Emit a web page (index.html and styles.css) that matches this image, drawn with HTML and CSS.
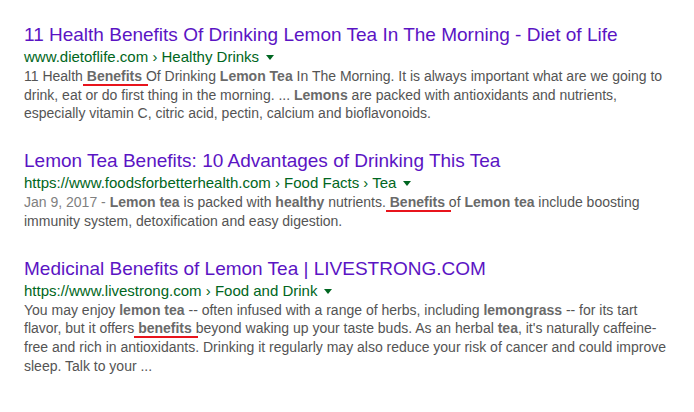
FILE: index.html
```html
<!DOCTYPE html>
<html lang="en">
<head>
    <meta charset="UTF-8">
    <title>lemon tea benefits - Search</title>
    <link rel="stylesheet" href="styles.css">
</head>
<body>
    <div class="results">
        <div class="result">
            <a class="title" href="#">11 Health Benefits Of Drinking Lemon Tea In The Morning - Diet of Life</a>
            <div class="url">www.dietoflife.com › Healthy Drinks<span class="arrow"></span></div>
            <p class="snippet">11 Health <b class="mark">Benefits</b> Of Drinking <b>Lemon Tea</b> In The Morning. It is always important what are we going to drink, eat or do first thing in the morning. ... <b>Lemons</b> are packed with antioxidants and nutrients, especially vitamin C, citric acid, pectin, calcium and bioflavonoids.</p>
        </div>

        <div class="result">
            <a class="title" href="#">Lemon Tea Benefits: 10 Advantages of Drinking This Tea</a>
            <div class="url">https://www.foodsforbetterhealth.com › Food Facts › Tea<span class="arrow"></span></div>
            <p class="snippet"><span class="date">Jan 9, 2017 - </span><b>Lemon tea</b> is packed with <b>healthy</b> nutrients. <b class="mark">Benefits</b> of <b>Lemon tea</b> include boosting immunity system, detoxification and easy digestion.</p>
        </div>

        <div class="result">
            <a class="title" href="#">Medicinal Benefits of Lemon Tea | LIVESTRONG.COM</a>
            <div class="url">https://www.livestrong.com › Food and Drink<span class="arrow"></span></div>
            <p class="snippet">You may enjoy <b>lemon tea</b> -- often infused with a range of herbs, including <b>lemongrass</b> -- for its tart flavor, but it offers <b class="mark">benefits</b> beyond waking up your taste buds. As an herbal <b>tea</b>, it's naturally caffeine-free and rich in antioxidants. Drinking it regularly may also reduce your risk of cancer and could improve sleep. Talk to your ...</p>
        </div>
    </div>
</body>
</html>
```

FILE: styles.css
```css
* {
    margin: 0;
    padding: 0;
    box-sizing: border-box;
}

body {
    font-family: 'Liberation Sans', Arial, sans-serif;
    background: #fff;
    padding: 24px 0 0 24px;
}

.results {
    max-width: 650px;
}

.result {
    margin-bottom: 27px;
}

.title {
    display: block;
    font-size: 19px;
    line-height: 22px;
    color: #5b14c4;
    text-decoration: none;
}

.url {
    font-size: 15px;
    line-height: 20px;
    margin-top: 1px;
    color: #006621;
    display: flex;
    align-items: center;
}

.arrow {
    margin-left: 7px;
    margin-top: 1px;
    border-top: 5px solid #006621;
    border-left: 4px solid transparent;
    border-right: 4px solid transparent;
}

.snippet {
    font-size: 14px;
    line-height: 18.7px;
    color: #545454;
}

.snippet b {
    color: #6a6a6a;
}

.date {
    color: #808080;
}

/* hand-drawn red marker under the keyword */
.mark {
    position: relative;
}

.mark::after {
    content: '';
    position: absolute;
    left: -4px;
    right: -6px;
    bottom: -2px;
    height: 2px;
    background: #e8141c;
}
```
